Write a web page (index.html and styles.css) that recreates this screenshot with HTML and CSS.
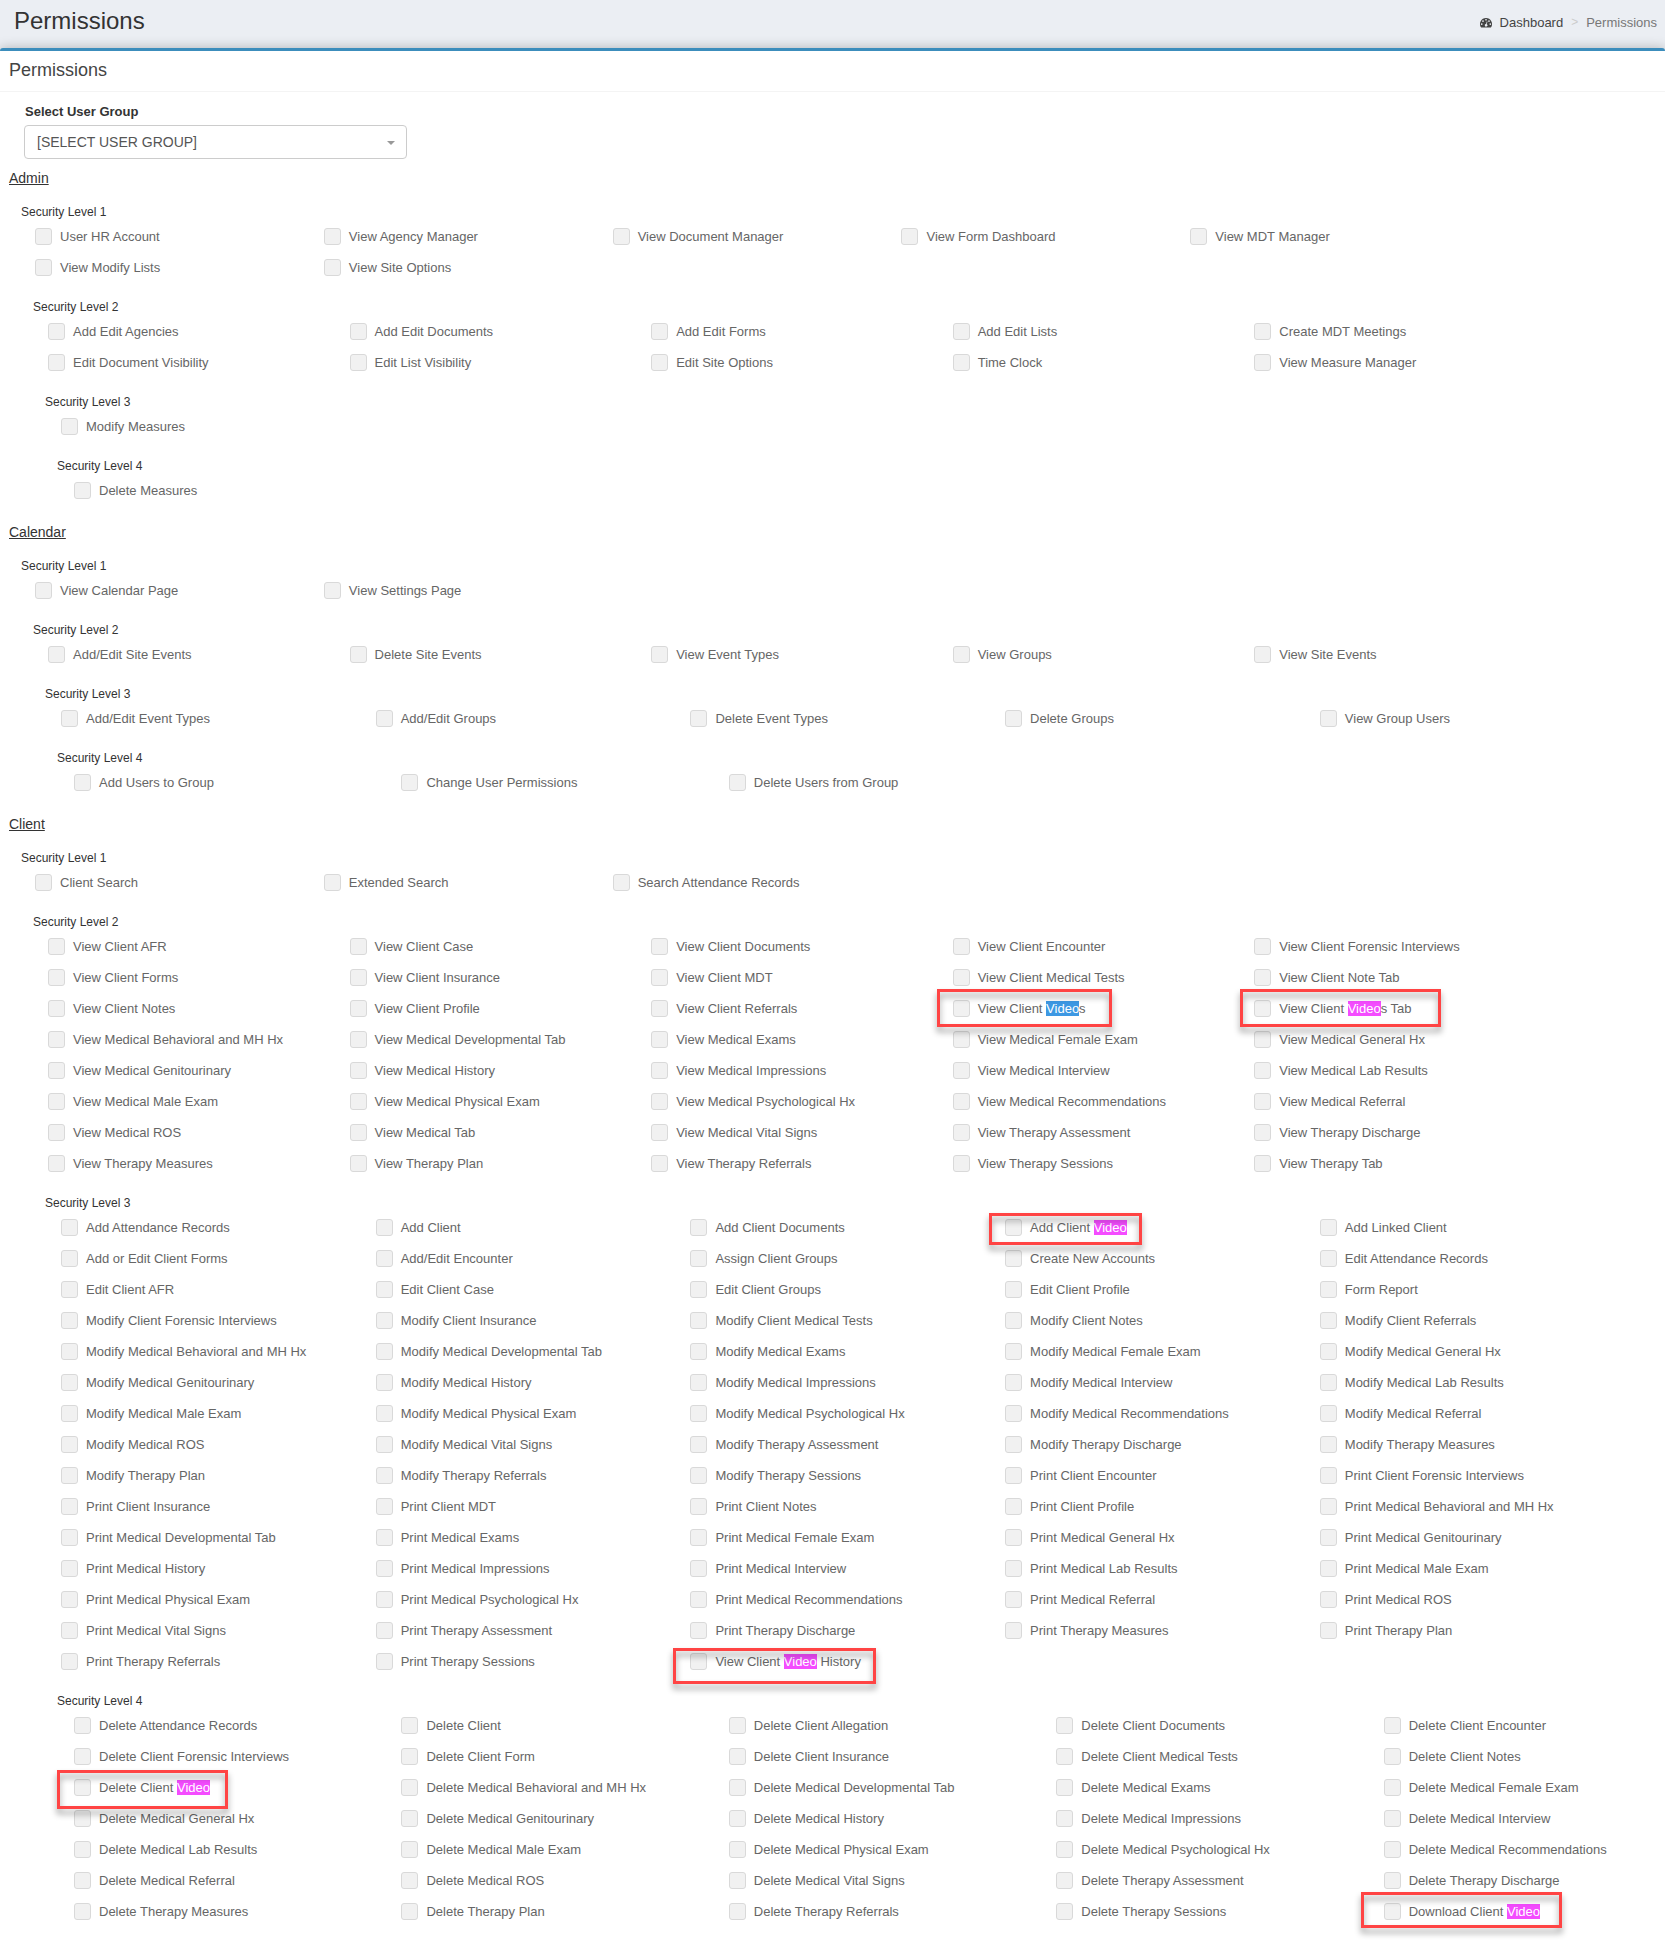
FILE: index.html
```html
<!DOCTYPE html>
<html lang="en">
<head>
  <meta charset="UTF-8">
  <title>Permissions</title>
  <link rel="stylesheet" href="styles.css">
</head>
<body>
  <header class="content-header">
    <h1>Permissions</h1>
    <nav class="breadcrumb">
      <a href="#">
        <svg class="icon" viewBox="0 0 14 12" width="12" height="11" aria-hidden="true">
          <path fill="#444" fill-rule="evenodd" d="M7 .8a7 7 0 0 0-5.9 10.8q.2.3.6.3h10.6q.4 0 .6-.3A7 7 0 0 0 7 .8zM2 6.8a1 1 0 1 1 0 2 1 1 0 0 1 0-2zM3.5 3.3a1 1 0 1 1 0 2 1 1 0 0 1 0-2zM7 1.8a1 1 0 1 1 0 2 1 1 0 0 1 0-2zM10.5 3.3a1 1 0 1 1 0 2 1 1 0 0 1 0-2zM12 6.8a1 1 0 1 1 0 2 1 1 0 0 1 0-2zM7.9 4.7l.8.2-.8 3.1a1.5 1.5 0 1 1-.8-.2z"/>
        </svg>
        Dashboard</a>
      <span class="sep">&gt;</span>
      <span class="active">Permissions</span>
    </nav>
  </header>

  <main class="box">
    <h2 class="box-title">Permissions</h2>
    <div class="user-group">
      <label for="user-group">Select User Group</label>
      <div class="select-wrap">
        <select id="user-group">
          <option>[SELECT USER GROUP]</option>
        </select>
      </div>
    </div>
    <div id="permissions"></div>
  </main>

  <script src="script.js"></script>
</body>
</html>
```
FILE: styles.css
```css
* { box-sizing: border-box; }
body { margin: 0; font-family: "Liberation Sans", Arial, sans-serif; font-size: 13px; color: #333; background: #ebeef3; overflow-x: hidden; }

.content-header { display: flex; justify-content: space-between; height: 48px; padding: 6px 8px 0 14px; }
.content-header h1 { margin: 0; font-size: 24px; font-weight: normal; line-height: 30px; }
.breadcrumb { display: flex; align-items: center; gap: 8px; height: 32px; }
.breadcrumb a { display: flex; align-items: center; gap: 8px; color: #444; text-decoration: none; }
.breadcrumb .sep { font-size: 12px; color: #ccc; }
.breadcrumb .active { color: #777; }

.box { min-height: calc(100vh - 48px); background: #fff; border-top: 3px solid #3c8dbc; border-radius: 3px 3px 0 0; box-shadow: 0 0 12px rgba(0, 0, 0, 0.25); }
.box-title { margin: 0; padding: 8px 9px 10px; font-size: 18px; font-weight: normal; line-height: 22px; color: #444; border-bottom: 1px solid #f4f4f4; }

.user-group { padding: 11px 24px 0; }
.user-group label { display: block; font-weight: bold; line-height: 18px; padding-left: 1px; }
.select-wrap { position: relative; width: 23.7%; min-width: 240px; margin-top: 4px; }
.select-wrap::after { content: ""; position: absolute; right: 12px; top: 16px; border: 4px solid transparent; border-top-color: #999; border-bottom: 0; pointer-events: none; }
.user-group select { display: block; width: 100%; height: 34px; padding: 0 12px; font: 14px "Liberation Sans", Arial, sans-serif; color: #555; background: #fff; border: 1px solid #ccc; border-radius: 4px; appearance: none; }

.section-title { margin: 0; padding: 9px 9px 7px; font-size: 14px; font-weight: normal; line-height: 20px; text-decoration: underline; }
.level-title { margin: 0; padding: 8px 0 7px; font-size: 12px; font-weight: normal; line-height: 18px; }
.level-1 .level-title { padding-left: 21px; }
.level-2 .level-title { padding-left: 33px; }
.level-3 .level-title { padding-left: 45px; }
.level-4 .level-title { padding-left: 57px; }

/* deeper levels are indented and get wider columns */
.perms { display: grid; }
.level-1 .perms { padding-left: 35px; grid-template-columns: repeat(4, 17.72%) 1fr; }
.level-2 .perms { padding-left: 48px; grid-template-columns: repeat(4, 18.65%) 1fr; }
.level-3 .perms { padding-left: 61px; grid-template-columns: repeat(4, 19.62%) 1fr; }
.level-4 .perms { padding-left: 74px; grid-template-columns: repeat(4, 20.58%) 1fr; }

.perm { position: relative; display: flex; gap: 8px; height: 31px; color: #666; line-height: 18px; white-space: nowrap; }
.perm input { flex: none; width: 17px; height: 17px; margin: 0; background: #f1f1f1; border: 1px solid #d9d9d9; border-radius: 3px; appearance: none; }
.perm input:checked { background: #3c8dbc; }
.perm mark { color: #fff; background: #f44cff; }
.perm mark.current { background: #3d98e3; }

/* red frames around the video permissions */
.frame { position: absolute; z-index: 1; border: 3px solid #ff4444; filter: drop-shadow(0 5px 3px rgba(0, 0, 0, 0.4)); pointer-events: none; }
.frame-videos { left: -16px; top: -11px; width: 175px; height: 38px; }
.frame-tab { left: -14px; top: -11px; width: 201px; height: 38px; }
.frame-add { left: -16px; top: -6px; width: 153px; height: 32px; }
.frame-history { left: -17px; top: -5px; width: 203px; height: 36px; }
.frame-delete { left: -17px; top: -9px; width: 171px; height: 39px; }
.frame-download { left: -23px; top: -11px; width: 201px; height: 36px; }
```
FILE: script.js
```js
const sections = {
  Admin: [
    ['User HR Account', 'View Agency Manager', 'View Document Manager', 'View Form Dashboard', 'View MDT Manager',
     'View Modify Lists', 'View Site Options'],
    ['Add Edit Agencies', 'Add Edit Documents', 'Add Edit Forms', 'Add Edit Lists', 'Create MDT Meetings',
     'Edit Document Visibility', 'Edit List Visibility', 'Edit Site Options', 'Time Clock', 'View Measure Manager'],
    ['Modify Measures'],
    ['Delete Measures']
  ],
  Calendar: [
    ['View Calendar Page', 'View Settings Page'],
    ['Add/Edit Site Events', 'Delete Site Events', 'View Event Types', 'View Groups', 'View Site Events'],
    ['Add/Edit Event Types', 'Add/Edit Groups', 'Delete Event Types', 'Delete Groups', 'View Group Users'],
    ['Add Users to Group', 'Change User Permissions', 'Delete Users from Group']
  ],
  Client: [
    ['Client Search', 'Extended Search', 'Search Attendance Records'],
    ['View Client AFR', 'View Client Case', 'View Client Documents', 'View Client Encounter', 'View Client Forensic Interviews',
     'View Client Forms', 'View Client Insurance', 'View Client MDT', 'View Client Medical Tests', 'View Client Note Tab',
     'View Client Notes', 'View Client Profile', 'View Client Referrals', 'View Client Videos', 'View Client Videos Tab',
     'View Medical Behavioral and MH Hx', 'View Medical Developmental Tab', 'View Medical Exams', 'View Medical Female Exam', 'View Medical General Hx',
     'View Medical Genitourinary', 'View Medical History', 'View Medical Impressions', 'View Medical Interview', 'View Medical Lab Results',
     'View Medical Male Exam', 'View Medical Physical Exam', 'View Medical Psychological Hx', 'View Medical Recommendations', 'View Medical Referral',
     'View Medical ROS', 'View Medical Tab', 'View Medical Vital Signs', 'View Therapy Assessment', 'View Therapy Discharge',
     'View Therapy Measures', 'View Therapy Plan', 'View Therapy Referrals', 'View Therapy Sessions', 'View Therapy Tab'],
    ['Add Attendance Records', 'Add Client', 'Add Client Documents', 'Add Client Video', 'Add Linked Client',
     'Add or Edit Client Forms', 'Add/Edit Encounter', 'Assign Client Groups', 'Create New Accounts', 'Edit Attendance Records',
     'Edit Client AFR', 'Edit Client Case', 'Edit Client Groups', 'Edit Client Profile', 'Form Report',
     'Modify Client Forensic Interviews', 'Modify Client Insurance', 'Modify Client Medical Tests', 'Modify Client Notes', 'Modify Client Referrals',
     'Modify Medical Behavioral and MH Hx', 'Modify Medical Developmental Tab', 'Modify Medical Exams', 'Modify Medical Female Exam', 'Modify Medical General Hx',
     'Modify Medical Genitourinary', 'Modify Medical History', 'Modify Medical Impressions', 'Modify Medical Interview', 'Modify Medical Lab Results',
     'Modify Medical Male Exam', 'Modify Medical Physical Exam', 'Modify Medical Psychological Hx', 'Modify Medical Recommendations', 'Modify Medical Referral',
     'Modify Medical ROS', 'Modify Medical Vital Signs', 'Modify Therapy Assessment', 'Modify Therapy Discharge', 'Modify Therapy Measures',
     'Modify Therapy Plan', 'Modify Therapy Referrals', 'Modify Therapy Sessions', 'Print Client Encounter', 'Print Client Forensic Interviews',
     'Print Client Insurance', 'Print Client MDT', 'Print Client Notes', 'Print Client Profile', 'Print Medical Behavioral and MH Hx',
     'Print Medical Developmental Tab', 'Print Medical Exams', 'Print Medical Female Exam', 'Print Medical General Hx', 'Print Medical Genitourinary',
     'Print Medical History', 'Print Medical Impressions', 'Print Medical Interview', 'Print Medical Lab Results', 'Print Medical Male Exam',
     'Print Medical Physical Exam', 'Print Medical Psychological Hx', 'Print Medical Recommendations', 'Print Medical Referral', 'Print Medical ROS',
     'Print Medical Vital Signs', 'Print Therapy Assessment', 'Print Therapy Discharge', 'Print Therapy Measures', 'Print Therapy Plan',
     'Print Therapy Referrals', 'Print Therapy Sessions', 'View Client Video History'],
    ['Delete Attendance Records', 'Delete Client', 'Delete Client Allegation', 'Delete Client Documents', 'Delete Client Encounter',
     'Delete Client Forensic Interviews', 'Delete Client Form', 'Delete Client Insurance', 'Delete Client Medical Tests', 'Delete Client Notes',
     'Delete Client Video', 'Delete Medical Behavioral and MH Hx', 'Delete Medical Developmental Tab', 'Delete Medical Exams', 'Delete Medical Female Exam',
     'Delete Medical General Hx', 'Delete Medical Genitourinary', 'Delete Medical History', 'Delete Medical Impressions', 'Delete Medical Interview',
     'Delete Medical Lab Results', 'Delete Medical Male Exam', 'Delete Medical Physical Exam', 'Delete Medical Psychological Hx', 'Delete Medical Recommendations',
     'Delete Medical Referral', 'Delete Medical ROS', 'Delete Medical Vital Signs', 'Delete Therapy Assessment', 'Delete Therapy Discharge',
     'Delete Therapy Measures', 'Delete Therapy Plan', 'Delete Therapy Referrals', 'Delete Therapy Sessions', 'Download Client Video']
  ]
};

const frames = {
  'View Client Videos': 'videos',
  'View Client Videos Tab': 'tab',
  'Add Client Video': 'add',
  'View Client Video History': 'history',
  'Delete Client Video': 'delete',
  'Download Client Video': 'download'
};

function permHtml(name) {
  const frame = frames[name];
  const cls = frame === 'videos' ? ' class="current"' : '';
  const text = name.replace('Video', `<mark${cls}>Video</mark>`);
  return `<label class="perm"><input type="checkbox"><span>${text}</span>${frame ? `<i class="frame frame-${frame}"></i>` : ''}</label>`;
}

let html = '';
for (const title in sections) {
  html += `<section><h3 class="section-title">${title}</h3>`;
  sections[title].forEach((perms, i) => {
    html += `<div class="level-${i + 1}">
      <h4 class="level-title">Security Level ${i + 1}</h4>
      <div class="perms">${perms.map(permHtml).join('')}</div>
    </div>`;
  });
  html += '</section>';
}
document.getElementById('permissions').innerHTML = html;
```
